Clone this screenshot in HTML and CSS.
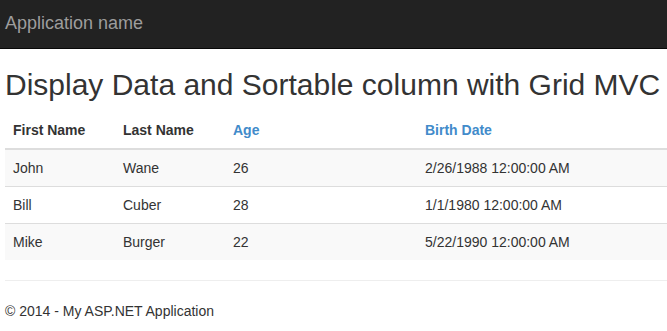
FILE: index.html
```html
<!DOCTYPE html>
<html>
<head>
<meta charset="utf-8">
<title>Grid MVC</title>
<link rel="stylesheet" href="styles.css">
</head>
<body>
<div class="navbar">
  <a class="brand" href="#">Application name</a>
</div>
<div class="container">
  <h2 class="title">Display Data and Sortable column with Grid MVC</h2>
  <table class="grid">
    <thead>
      <tr>
        <th class="c1">First Name</th>
        <th class="c2">Last Name</th>
        <th class="c3"><a href="#">Age</a></th>
        <th class="c4"><a href="#">Birth Date</a></th>
      </tr>
    </thead>
    <tbody>
      <tr><td>John</td><td>Wane</td><td>26</td><td>2/26/1988 12:00:00 AM</td></tr>
      <tr><td>Bill</td><td>Cuber</td><td>28</td><td>1/1/1980 12:00:00 AM</td></tr>
      <tr><td>Mike</td><td>Burger</td><td>22</td><td>5/22/1990 12:00:00 AM</td></tr>
    </tbody>
  </table>
  <hr class="rule">
  <footer class="footer">
    <p>&copy; 2014 - My ASP.NET Application</p>
  </footer>
</div>
</body>
</html>
```
FILE: styles.css
```css
html, body {
  margin: 0;
  padding: 0;
}
body {
  font-family: "Liberation Sans", Arial, Helvetica, sans-serif;
  font-size: 14px;
  line-height: 20px;
  color: #333333;
  background: #ffffff;
  overflow: hidden;
}
a {
  color: #428bca;
  text-decoration: none;
}
.navbar {
  height: 48px;
  background: #222222;
  border-bottom: 1px solid #080808;
  box-sizing: content-box;
}
.brand {
  display: block;
  padding: 13px 5px 0;
  font-size: 18px;
  line-height: 20px;
  color: #9d9d9d;
}
.container {
  padding-left: 5px;
}
.title {
  margin: 19px 0 11px;
  font-size: 30px;
  font-weight: 500;
  line-height: 33px;
  color: #333333;
}
.grid {
  width: 662px;
  border-collapse: collapse;
  border-spacing: 0;
  table-layout: fixed;
  margin-bottom: 20px;
}
.grid th,
.grid td {
  padding: 8px;
  line-height: 20px;
  text-align: left;
  vertical-align: top;
}
.grid th {
  font-weight: bold;
  border-bottom: 2px solid #dddddd;
}
.grid td {
  border-top: 1px solid #dddddd;
}
.grid tbody tr:nth-child(odd) td {
  background: #f9f9f9;
}
.grid th a {
  color: #428bca;
}
.c1 { width: 94px; }
.c2 { width: 94px; }
.c3 { width: 176px; }
.rule {
  margin: 20px 0;
  border: 0;
  border-top: 1px solid #eeeeee;
  height: 0;
}
.footer p {
  margin: 0 0 10px;
}
```
